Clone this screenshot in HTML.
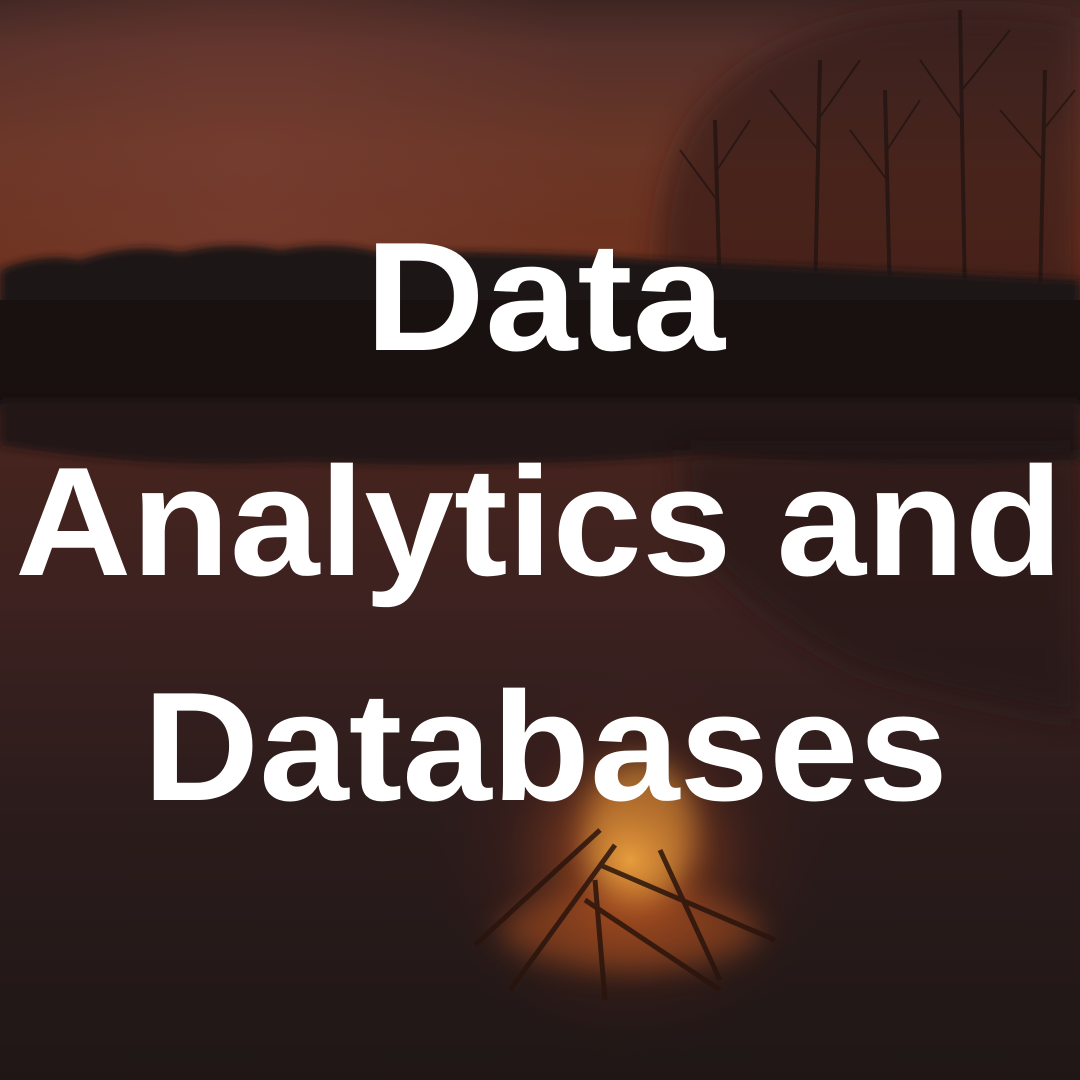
<!DOCTYPE html>
<html><head><meta charset="utf-8"><style>
html,body{margin:0;padding:0;width:1080px;height:1080px;overflow:hidden;background:#1e1614}
svg{display:block}
</style></head><body>
<svg width="1080" height="1080" viewBox="0 0 1080 1080" xmlns="http://www.w3.org/2000/svg">
<defs>
<linearGradient id="sky" x1="0" y1="0" x2="0" y2="1">
<stop offset="0" stop-color="#3e2522"/>
<stop offset="0.15" stop-color="#55302a"/>
<stop offset="0.5" stop-color="#6a3626"/>
<stop offset="0.85" stop-color="#6e321f"/>
<stop offset="1" stop-color="#5a2a1e"/>
</linearGradient>
<linearGradient id="water" x1="0" y1="0" x2="0" y2="1">
<stop offset="0" stop-color="#4a241c"/>
<stop offset="0.3" stop-color="#3d2220"/>
<stop offset="0.6" stop-color="#2c1c1c"/>
<stop offset="1" stop-color="#1f1716"/>
</linearGradient>
<radialGradient id="glow" cx="630" cy="860" r="200" gradientUnits="userSpaceOnUse">
<stop offset="0" stop-color="#f0a040" stop-opacity="0.85"/>
<stop offset="0.3" stop-color="#b85020" stop-opacity="0.5"/>
<stop offset="0.65" stop-color="#5a2418" stop-opacity="0.2"/>
<stop offset="1" stop-color="#3a1a14" stop-opacity="0"/>
</radialGradient>
<radialGradient id="skyglow" cx="250" cy="170" r="350" gradientUnits="userSpaceOnUse">
<stop offset="0" stop-color="#7a4034" stop-opacity="0.6"/>
<stop offset="1" stop-color="#7a4034" stop-opacity="0"/>
</radialGradient>
<filter id="b" filterUnits="userSpaceOnUse" x="0" y="-100" width="1080" height="1280"><feGaussianBlur stdDeviation="14"/></filter>
<filter id="b2" filterUnits="userSpaceOnUse" x="-50" y="0" width="1180" height="1080"><feGaussianBlur stdDeviation="4"/></filter>
</defs>
<rect width="1080" height="300" fill="url(#sky)"/>
<rect width="1080" height="300" fill="url(#skyglow)"/>
<rect y="380" width="1080" height="700" fill="url(#water)"/>
<path d="M660 300 Q650 180 700 110 Q760 40 860 20 Q980 0 1080 20 L1080 300 Z" fill="#2a1614" opacity="0.55" filter="url(#b)"/>
<g stroke="#1e1210" fill="none" opacity="0.7">
<g stroke-width="4">
<line x1="720" y1="300" x2="715" y2="120"/><line x1="815" y1="300" x2="820" y2="60"/>
<line x1="890" y1="300" x2="885" y2="90"/><line x1="965" y1="300" x2="960" y2="10"/>
<line x1="1040" y1="300" x2="1045" y2="70"/></g>
<g stroke-width="2">
<path d="M717 200 L680 150 M717 170 L750 120 M818 150 L770 90 M818 120 L860 60 M887 180 L850 130 M887 150 L920 100 M962 120 L920 60 M962 90 L1010 30 M1043 160 L1000 110 M1043 130 L1075 90"/>
</g></g>
<path d="M0 270 Q40 252 80 260 Q130 242 180 252 Q230 240 280 250 Q330 240 380 252 Q520 250 660 260 L1080 280 L1080 410 L0 410 Z" fill="#1b1312" filter="url(#b2)"/>
<rect y="300" width="1080" height="105" fill="#181110"/>
<path d="M0 400 L1080 400 L1080 460 Q900 470 700 455 Q500 470 300 462 Q150 470 0 445 Z" fill="#211615" filter="url(#b2)"/>
<path d="M680 450 L1080 450 L1080 720 Q950 700 860 670 Q760 620 690 540 Z" fill="#231715" opacity="0.6" filter="url(#b)"/>
<rect y="600" width="1080" height="480" fill="url(#glow)"/>
<ellipse cx="630" cy="930" rx="130" ry="40" fill="#d06020" opacity="0.4" filter="url(#b)"/>
<ellipse cx="640" cy="830" rx="55" ry="70" fill="#ffb040" opacity="0.45" filter="url(#b)"/>
<g stroke="#2a140c" stroke-width="5" opacity="0.85">
<line x1="475" y1="945" x2="600" y2="830"/>
<line x1="510" y1="990" x2="615" y2="845"/>
<line x1="585" y1="900" x2="720" y2="990"/>
<line x1="600" y1="865" x2="775" y2="940"/>
<line x1="595" y1="880" x2="605" y2="1000"/>
<line x1="660" y1="850" x2="720" y2="980"/>
</g>
<g fill="#ffffff" font-family="Liberation Sans, sans-serif" font-weight="bold" font-size="155">
<text x="365" y="350" textLength="360" lengthAdjust="spacingAndGlyphs">Data</text>
<text x="15" y="575" textLength="1048" lengthAdjust="spacingAndGlyphs">Analytics and</text>
<text x="143" y="800" textLength="805" lengthAdjust="spacingAndGlyphs">Databases</text>
</g>
</svg>
</body></html>
